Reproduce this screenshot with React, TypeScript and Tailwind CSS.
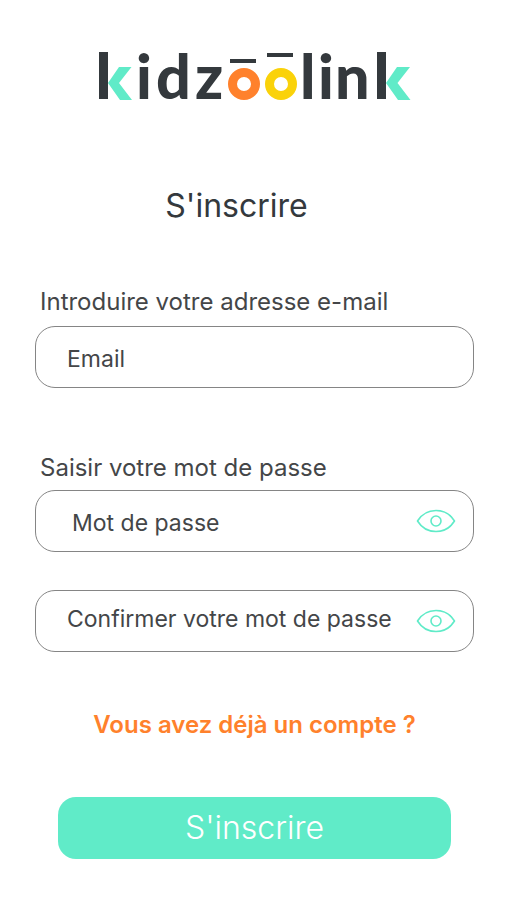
import { useState } from 'react';
import type { FormEvent } from 'react';

const fieldClass =
  'block h-[62px] w-full rounded-[20px] border border-[#858585] bg-white text-[#444648] outline-none placeholder:text-[#444648] placeholder:opacity-100 focus:border-[#60ebc8]';

function Logo() {
  return (
    <svg viewBox="0 -20 312 88" className="w-[312px] max-w-full" role="img" aria-label="kidzoolink">
      {/* k */}
      <rect x="0" y="0" width="9" height="47" fill="#34393d" />
      <path d="M9 31L20 15H32.500L20 31L33 48H21Z" fill="#60ebc8" />

      <text y="47" x="37 57 96" fill="#34393d" fontFamily="Lato, sans-serif" fontWeight="900" fontSize="61">idz</text>

      {/* eyes and eyebrows */}
      <rect x="131" y="7" width="26" height="4" fill="#34393d" />
      <circle cx="145" cy="32" r="11.500" fill="none" stroke="#ff812c" strokeWidth="9" />
      <rect x="168" y="1" width="26" height="4" fill="#34393d" />
      <circle cx="182" cy="32" r="11.500" fill="none" stroke="#fad20a" strokeWidth="9" />

      <text y="47" x="201 219 236" fill="#34393d" fontFamily="Lato, sans-serif" fontWeight="900" fontSize="61">lin</text>

      {/* k */}
      <rect x="278" y="0" width="9" height="47" fill="#34393d" />
      <path d="M287 31L298 15H311L298.500 31L311.500 48H299Z" fill="#60ebc8" />
    </svg>
  );
}

function EyeIcon() {
  return (
    <svg width="40" height="24" viewBox="0 0 40 24" fill="none" stroke="#60ebc8" strokeWidth="1.600">
      <path d="M1.500 12C5.500 5.500 12.500 1.500 20 1.500S34.500 5.500 38.500 12C34.500 18.500 27.500 22.500 20 22.500S5.500 18.500 1.500 12Z" strokeLinejoin="round" />
      <circle cx="20" cy="12" r="5" />
    </svg>
  );
}

interface PasswordFieldProps {
  id: string;
  placeholder: string;
  className: string;
}

function PasswordField({ id, placeholder, className }: PasswordFieldProps) {
  const [visible, setVisible] = useState(false);

  return (
    <div className="relative">
      <input
        id={id}
        type={visible ? 'text' : 'password'}
        placeholder={placeholder}
        aria-label={placeholder}
        className={`${fieldClass} pr-16 text-[23px] ${className}`}
      />
      <button
        type="button"
        onClick={() => setVisible(!visible)}
        aria-label="Afficher le mot de passe"
        className="absolute inset-y-0 right-[18px] flex items-center"
      >
        <EyeIcon />
      </button>
    </div>
  );
}

export default function App() {
  const handleSubmit = (e: FormEvent) => e.preventDefault();

  return (
    <main className="min-h-screen bg-white pt-8 pr-[33px] pb-10 pl-[35px] font-['Inter',sans-serif] text-[#444648]">
      <div className="flex justify-center">
        <Logo />
      </div>

      <h1 className="mt-[66px] pr-9 text-center text-[32px] leading-10 text-[#34393d]">S'inscrire</h1>

      <form onSubmit={handleSubmit}>
        <label htmlFor="email" className="mt-15 block pl-[5px] text-[24px] leading-8">
          Introduire votre adresse e-mail
        </label>
        <input id="email" type="email" placeholder="Email" className={`${fieldClass} mt-2 px-[31px] pt-1 text-[23px]`} />

        <label htmlFor="password" className="mt-16 mb-[6px] block pl-[5px] text-[24px] leading-8">
          Saisir votre mot de passe
        </label>
        <PasswordField id="password" placeholder="Mot de passe" className="pt-1 pl-9" />

        <div className="mt-[38px]">
          <PasswordField id="confirm" placeholder="Confirmer votre mot de passe" className="pb-1 pl-[31px]" />
        </div>

        <div className="mt-[57px] text-center">
          <a href="#connexion" className="text-[24px] leading-8 font-semibold text-[#ff812c]">
            Vous avez déjà un compte ?
          </a>
        </div>

        <div className="mt-14 px-[23px]">
          <button type="submit" className="h-[62px] w-full rounded-[18px] bg-[#60ebc8] text-[32px] font-light text-white">
            S'inscrire
          </button>
        </div>
      </form>
    </main>
  );
}
